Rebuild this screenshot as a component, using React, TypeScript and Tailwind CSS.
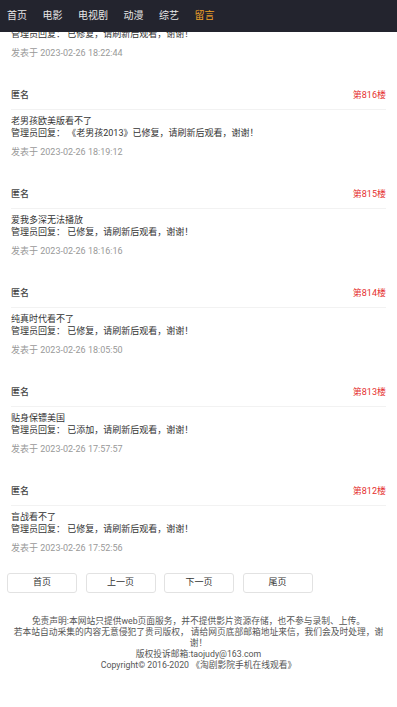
import React from "react";

const font = { fontFamily: 'Roboto, "Noto Sans CJK SC", "Noto Sans", sans-serif' };

type C = { floor: number; q: string; a: string; t: string };

const comments: C[] = [
  { floor: 816, q: "老男孩欧美版看不了", a: "《老男孩2013》已修复，请刷新后观看，谢谢！", t: "2023-02-26 18:19:12" },
  { floor: 815, q: "爱我多深无法播放", a: "已修复，请刷新后观看，谢谢！", t: "2023-02-26 18:16:16" },
  { floor: 814, q: "纯真时代看不了", a: "已修复，请刷新后观看，谢谢！", t: "2023-02-26 18:05:50" },
  { floor: 813, q: "贴身保镖美国", a: "已添加，请刷新后观看，谢谢！", t: "2023-02-26 17:57:57" },
  { floor: 812, q: "盲战看不了", a: "已修复，请刷新后观看，谢谢！", t: "2023-02-26 17:52:56" },
];

const nav = ["首页", "电影", "电视剧", "动漫", "综艺", "留言"];

export default function App() {
  return (
    <div className="min-h-[707px] bg-white text-[9px]" style={font}>
      <header className="fixed top-0 left-0 right-0 h-[32px] bg-[#23242e] z-10 flex items-center pl-[7px] pb-[2px] gap-[15.5px] text-[10px]">
        {nav.map((n, i) => (
          <span key={n} className={i === 5 ? "text-[#f0a228]" : "text-[#e8e8e8]"}>
            {n}
          </span>
        ))}
      </header>

      <main className="pt-[28px] flex flex-col gap-[30px]">
        <div className="px-[11px]">
          <p className="leading-[12px] text-[#333]">管理员回复： 已修复，请刷新后观看，谢谢！</p>
          <p className="mt-[7px] leading-[12px] text-[#999]">发表于 2023-02-26 18:22:44</p>
        </div>
        {comments.map((c) => (
          <div key={c.floor} className="px-[11px]">
            <div className="flex justify-between leading-[12px] pb-[8px] border-b border-[#f2f2f2]">
              <span className="text-[#444] font-medium">匿名</span>
              <span className="text-[#e5302f]">第{c.floor}楼</span>
            </div>
            <div className="mt-[5px] leading-[12px] text-[#333]">
              <p>{c.q}</p>
              <p>管理员回复： {c.a}</p>
            </div>
            <p className="mt-[7px] leading-[12px] text-[#999]">发表于 {c.t}</p>
          </div>
        ))}
      </main>

      <nav className="mt-[19px] pl-[7px] flex gap-[8.5px]">
        {["首页", "上一页", "下一页", "尾页"].map((b) => (
          <div
            key={b}
            className="w-[70px] h-[20px] border border-[#e2e2e2] rounded-[3px] flex items-center justify-center text-[#333]"
          >
            {b}
          </div>
        ))}
      </nav>

      <footer className="mt-[23px] px-[3px] text-center text-[8.75px] leading-[11px] text-[#555]">
        <p>免责声明:本网站只提供web页面服务，并不提供影片资源存储，也不参与录制、上传。</p>
        <p className="whitespace-nowrap">
          若本站自动采集的内容无意侵犯了贵司版权， 请给网页底部邮箱地址来信，我们会及时处理，谢
          <br />
          谢！
        </p>
        <p>版权投诉邮箱:taojudy@163.com</p>
        <p>Copyright© 2016-2020 《淘剧影院手机在线观看》</p>
      </footer>
    </div>
  );
}
